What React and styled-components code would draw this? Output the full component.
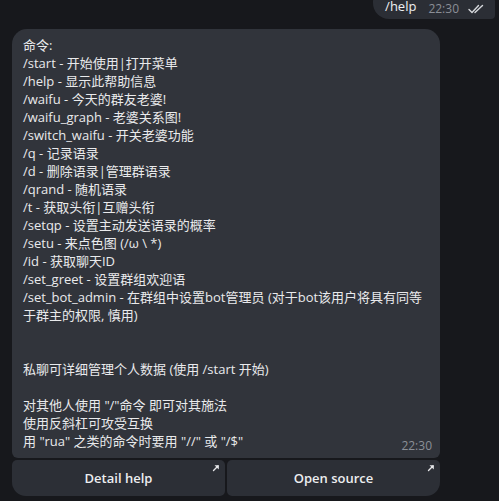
import React from "react";
import styled, { createGlobalStyle } from "styled-components";

const GlobalStyle = createGlobalStyle`
  html, body {
    margin: 0;
    padding: 0;
    background: #17181c;
    overflow: hidden;
  }
  body {
    font-family: "Open Sans", "Noto Sans CJK SC", sans-serif;
    color: #e9eaec;
  }
`;

const helpLines = [
  "命令:",
  "/start - 开始使用|打开菜单",
  "/help - 显示此帮助信息",
  "/waifu - 今天的群友老婆!",
  "/waifu_graph - 老婆关系图!",
  "/switch_waifu - 开关老婆功能",
  "/q - 记录语录",
  "/d - 删除语录|管理群语录",
  "/qrand - 随机语录",
  "/t - 获取头衔|互赠头衔",
  "/setqp - 设置主动发送语录的概率",
  "/setu - 来点色图 (/ω \\ *)",
  "/id - 获取聊天ID",
  "/set_greet - 设置群组欢迎语",
  "/set_bot_admin - 在群组中设置bot管理员 (对于bot该用户将具有同等",
  "于群主的权限, 慎用)",
  "",
  "",
  "私聊可详细管理个人数据 (使用 /start 开始)",
  "",
  "对其他人使用 \"/\"命令 即可对其施法",
  "使用反斜杠可攻受互换",
  "用 \"rua\" 之类的命令时要用 \"//\" 或 \"/$\"",
];

const DoubleCheck = () => (
  <svg width="18" height="10" viewBox="0 0 18 10" fill="none">
    <path d="M1 5.5 L4 8.5 L10.5 1.5" stroke="#d6d8dc" strokeWidth="1.4" strokeLinecap="round" strokeLinejoin="round" />
    <path d="M7 8.5 L14.5 1.5" stroke="#d6d8dc" strokeWidth="1.4" strokeLinecap="round" />
  </svg>
);

const ArrowIcon = () => (
  <svg width="8" height="8" viewBox="0 0 8 8">
    <path d="M1.5 6.5 L6 2" stroke="#e6e7ea" strokeWidth="1.4" strokeLinecap="round" />
    <path d="M2.5 1.2 L6.8 1.2 L6.8 5.5 Z" fill="#e6e7ea" />
  </svg>
);

export default function App() {
  return (
    <>
      <GlobalStyle />
      <Chat>
        <OutRow>
          <OutBubble>
            <OutText>/help</OutText>
            <OutMeta>
              <Time>22:30</Time>
              <DoubleCheck />
            </OutMeta>
          </OutBubble>
        </OutRow>
        <Message>
          <Bubble>
            <Body>
              {helpLines.map((line, i) => (
                <Line key={i}>{line || "\u00a0"}</Line>
              ))}
            </Body>
            <Meta>
              <Time>22:30</Time>
            </Meta>
          </Bubble>
          <Keyboard>
            <KeyButton $side="left">
              Detail help
              <Corner>
                <ArrowIcon />
              </Corner>
            </KeyButton>
            <KeyButton $side="right">
              Open source
              <Corner>
                <ArrowIcon />
              </Corner>
            </KeyButton>
          </Keyboard>
        </Message>
      </Chat>
    </>
  );
}

const Chat = styled.div`
  display: flex;
  flex-direction: column;
  padding: 0 12px;
  width: 499px;
  height: 501px;
  box-sizing: border-box;
`;

const OutRow = styled.div`
  display: flex;
  justify-content: flex-end;
  margin-top: -14px;
  margin-right: -8px;
`;

const OutBubble = styled.div`
  display: flex;
  align-items: flex-end;
  gap: 12px;
  background: #2b2e35;
  border-radius: 16px 16px 4px 16px;
  height: 33px;
  box-sizing: border-box;
  padding: 0 9px 2px 12px;
`;

const OutText = styled.span`
  font-size: 13px;
  line-height: 18px;
  color: #eef0f2;
  padding-bottom: 2px;
`;

const OutMeta = styled.span`
  display: flex;
  align-items: center;
  gap: 9px;
  padding-bottom: 1px;
`;

const Time = styled.span`
  font-size: 12px;
  line-height: 14px;
  color: #8b8f97;
`;

const Message = styled.div`
  display: flex;
  flex-direction: column;
  width: 428px;
  margin-top: 10px;
`;

const Bubble = styled.div`
  background: #31343b;
  border-radius: 15px 15px 6px 6px;
  padding: 7px 8px 5px 11px;
`;

const Body = styled.div`
  font-size: 13px;
  line-height: 18px;
`;

const Line = styled.div`
  white-space: nowrap;
`;

const Meta = styled.div`
  display: flex;
  justify-content: flex-end;
  margin-top: -11px;
`;

const Keyboard = styled.div`
  display: grid;
  grid-template-columns: 1fr 1fr;
  gap: 2px;
  margin-top: 2px;
`;

const KeyButton = styled.div`
  position: relative;
  height: 36px;
  display: flex;
  align-items: center;
  justify-content: center;
  background: #2c2f36;
  color: #eceef0;
  font-size: 13px;
  font-weight: 600;
  border-radius: ${(p) => (p.$side === "left" ? "5px 5px 5px 14px" : "5px 5px 14px 5px")};
`;

const Corner = styled.span`
  position: absolute;
  top: 4px;
  right: 5px;
  display: flex;
`;
